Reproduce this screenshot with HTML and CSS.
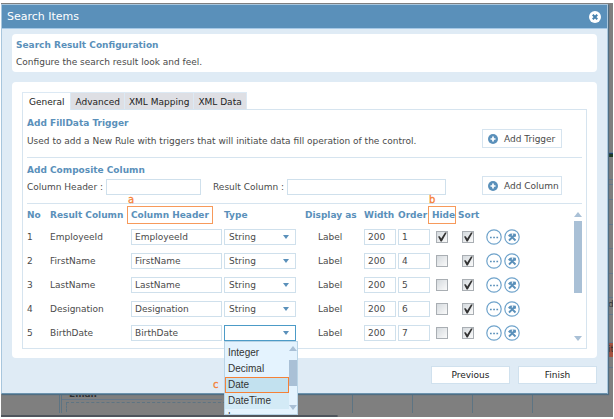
FILE: index.html
```html
<!DOCTYPE html>
<html lang="en">
<head>
  <meta charset="utf-8">
  <title>Search Items</title>
  <meta name="viewport" content="width=device-width, initial-scale=1.0">
  <link rel="stylesheet" href="styles.css">
</head>
<body>
  <svg class="sprite" aria-hidden="true">
    <symbol id="plus" viewBox="0 0 20 20">
      <circle cx="10" cy="10" r="10" fill="#5a90ba"/>
      <path d="M10 5v10M5 10h10" stroke="#fff" stroke-width="3.4"/>
    </symbol>
    <symbol id="dots" viewBox="0 0 16 16">
      <circle cx="8" cy="8" r="7.2" fill="#fff" stroke="#6fa3cb" stroke-width="1.2"/>
      <path d="M4 8.5h1.7M7.200 8.5h1.700M10.400 8.5h1.700" stroke="#5a90ba" stroke-width="1.5"/>
    </symbol>
    <symbol id="tools" viewBox="0 0 16 16">
      <circle cx="8" cy="8" r="7.200" fill="#fff" stroke="#6fa3cb" stroke-width="1.200"/>
      <path d="M5.500 5.500l6 6M10.500 6L5 11.500" stroke="#5a90ba" stroke-width="1.900"/>
      <path d="M4 6.600L6.800 4.400l2 .3-3.300 3.300zM9 4.600l2.800.2.300 2.600-2.400.6z" fill="#5a90ba"/>
    </symbol>
  </svg>

  <div class="screen">
    <div class="dialog" role="dialog" aria-labelledby="dialogTitle">
      <header class="dialog-header">
        <h1 id="dialogTitle">Search Items</h1>
        <button class="close" type="button" aria-label="Close">
          <svg viewBox="0 0 24 24"><circle cx="12" cy="12" r="12" fill="#fff"/><path d="M7.500 7.500l9 9M16.500 7.500l-9 9" stroke="#4681ae" stroke-width="4"/></svg>
        </button>
      </header>

      <div class="dialog-body">
        <section class="card intro">
          <h2>Search Result Configuration</h2>
          <p>Configure the search result look and feel.</p>
        </section>

        <section class="card config">
          <div class="tabs" role="tablist">
            <button class="tab active" type="button" role="tab" aria-selected="true">General</button>
            <button class="tab" type="button" role="tab">Advanced</button>
            <button class="tab" type="button" role="tab">XML Mapping</button>
            <button class="tab" type="button" role="tab">XML Data</button>
          </div>

          <div class="panel" role="tabpanel">
            <div class="block trigger">
              <div class="block-text">
                <h2>Add FillData Trigger</h2>
                <p>Used to add a New Rule with triggers that will initiate data fill operation of the control.</p>
              </div>
              <button class="add" type="button"><svg><use href="#plus"/></svg>Add Trigger</button>
            </div>

            <div class="block composite">
              <div class="block-text">
                <h2>Add Composite Column</h2>
                <div class="fields">
                  <label for="columnHeader">Column Header :</label>
                  <input class="short" type="text" id="columnHeader">
                  <label class="second" for="resultColumn">Result Column :</label>
                  <input class="long" type="text" id="resultColumn">
                </div>
              </div>
              <button class="add" type="button"><svg><use href="#plus"/></svg>Add Column</button>
            </div>

            <div class="list">
              <table>
                <colgroup>
                  <col class="c-no"><col class="c-result"><col class="c-header"><col class="c-type"><col class="c-display"><col class="c-width"><col class="c-order"><col class="c-hide"><col class="c-sort"><col class="c-actions">
                </colgroup>
                <thead>
                  <tr>
                    <th>No</th>
                    <th>Result Column</th>
                    <th><span class="mark">Column Header<i class="note">a</i></span></th>
                    <th>Type</th>
                    <th>Display as</th>
                    <th>Width</th>
                    <th>Order</th>
                    <th><span class="mark mark-tight">Hide<i class="note">b</i></span></th>
                    <th>Sort</th>
                    <th></th>
                  </tr>
                </thead>
                <tbody>
                  <tr>
                    <td>1</td>
                    <td>EmployeeId</td>
                    <td><input type="text" value="EmployeeId" aria-label="Column header 1"></td>
                    <td><div class="select"><select aria-label="Type 1"><option>String</option></select></div></td>
                    <td class="display">Label</td>
                    <td><input class="num" type="text" value="200" aria-label="Width 1"></td>
                    <td><input class="num" type="text" value="1" aria-label="Order 1"></td>
                    <td><input type="checkbox" aria-label="Hide 1" checked></td>
                    <td><input type="checkbox" aria-label="Sort 1" checked></td>
                    <td class="actions"><button type="button" aria-label="More"><svg><use href="#dots"/></svg></button><button type="button" aria-label="Settings"><svg><use href="#tools"/></svg></button></td>
                  </tr>
                  <tr>
                    <td>2</td>
                    <td>FirstName</td>
                    <td><input type="text" value="FirstName" aria-label="Column header 2"></td>
                    <td><div class="select"><select aria-label="Type 2"><option>String</option></select></div></td>
                    <td class="display">Label</td>
                    <td><input class="num" type="text" value="200" aria-label="Width 2"></td>
                    <td><input class="num" type="text" value="4" aria-label="Order 2"></td>
                    <td><input type="checkbox" aria-label="Hide 2"></td>
                    <td><input type="checkbox" aria-label="Sort 2" checked></td>
                    <td class="actions"><button type="button" aria-label="More"><svg><use href="#dots"/></svg></button><button type="button" aria-label="Settings"><svg><use href="#tools"/></svg></button></td>
                  </tr>
                  <tr>
                    <td>3</td>
                    <td>LastName</td>
                    <td><input type="text" value="LastName" aria-label="Column header 3"></td>
                    <td><div class="select"><select aria-label="Type 3"><option>String</option></select></div></td>
                    <td class="display">Label</td>
                    <td><input class="num" type="text" value="200" aria-label="Width 3"></td>
                    <td><input class="num" type="text" value="5" aria-label="Order 3"></td>
                    <td><input type="checkbox" aria-label="Hide 3"></td>
                    <td><input type="checkbox" aria-label="Sort 3" checked></td>
                    <td class="actions"><button type="button" aria-label="More"><svg><use href="#dots"/></svg></button><button type="button" aria-label="Settings"><svg><use href="#tools"/></svg></button></td>
                  </tr>
                  <tr>
                    <td>4</td>
                    <td>Designation</td>
                    <td><input type="text" value="Designation" aria-label="Column header 4"></td>
                    <td><div class="select"><select aria-label="Type 4"><option>String</option></select></div></td>
                    <td class="display">Label</td>
                    <td><input class="num" type="text" value="200" aria-label="Width 4"></td>
                    <td><input class="num" type="text" value="6" aria-label="Order 4"></td>
                    <td><input type="checkbox" aria-label="Hide 4"></td>
                    <td><input type="checkbox" aria-label="Sort 4" checked></td>
                    <td class="actions"><button type="button" aria-label="More"><svg><use href="#dots"/></svg></button><button type="button" aria-label="Settings"><svg><use href="#tools"/></svg></button></td>
                  </tr>
                  <tr>
                    <td>5</td>
                    <td>BirthDate</td>
                    <td><input type="text" value="BirthDate" aria-label="Column header 5"></td>
                    <td>
                      <div class="select open">
                        <select aria-label="Type 5"><option></option></select>
                        <div class="menu">
                          <ul role="listbox">
                            <li role="option">Integer</li>
                            <li role="option">Decimal</li>
                            <li role="option" class="selected">Date<i class="note">c</i></li>
                            <li role="option" class="hover">DateTime</li>
                            <li role="option">Long</li>
                          </ul>
                          <div class="scrollbar"><span class="up"></span><span class="thumb"></span><span class="down"></span></div>
                        </div>
                      </div>
                    </td>
                    <td class="display">Label</td>
                    <td><input class="num" type="text" value="200" aria-label="Width 5"></td>
                    <td><input class="num" type="text" value="7" aria-label="Order 5"></td>
                    <td><input type="checkbox" aria-label="Hide 5"></td>
                    <td><input type="checkbox" aria-label="Sort 5" checked></td>
                    <td class="actions"><button type="button" aria-label="More"><svg><use href="#dots"/></svg></button><button type="button" aria-label="Settings"><svg><use href="#tools"/></svg></button></td>
                  </tr>
                </tbody>
              </table>
              <div class="scrollbar"><span class="up"></span><span class="thumb"></span><span class="down"></span></div>
            </div>
          </div>
        </section>

        <footer class="dialog-footer">
          <button type="button">Previous</button>
          <button type="button">Finish</button>
        </footer>
      </div>
    </div>

    <!-- dimmed form behind the dialog -->
    <div class="behind-right">
      <span></span>
      <span class="green"></span>
      <span></span>
      <span></span>
      <span></span>
      <span></span>
      <span></span>
      <span></span>
      <span></span>
      <span>d</span>
      <span></span>
      <span class="red">it</span>
      <span></span>
    </div>
    <div class="behind-bottom">
      <div class="form-part">
        <div class="email"><b>Email</b></div>
        <div class="drop"></div>
      </div>
      <div class="cell"></div>
      <div class="cell"></div>
      <div class="cell"></div>
      <div class="cell"></div>
    </div>
  </div>
</body>
</html>
```
FILE: styles.css
```css
* {
  box-sizing: border-box;
}
body {
  margin: 0;
  background: #fff;
  color: #4a4a4a;
  font-family: "DejaVu Sans", Verdana, sans-serif;
  font-size: 9px;
  line-height: 12px;
}
h1, h2, p, ul {
  margin: 0;
  padding: 0;
}
button, input, select {
  margin: 0;
  padding: 0;
  color: inherit;
  font: inherit;
}
.sprite {
  position: absolute;
  width: 0;
  height: 0;
}
.screen {
  display: grid;
  grid-template-columns: 1fr 5px;
  grid-template-rows: auto 23px;
  margin: 3px 1px 0;
  padding-top: 1px;
  background: #7f7f7f;
}

/* dialog */
.dialog {
  z-index: 1;
  border: 1px solid #a8c6dd;
  border-bottom-color: #6c93ae;
  background: #dfebf5;
  box-shadow: 1px 1px 1px #4f6d82;
}
.dialog-header {
  display: flex;
  align-items: center;
  justify-content: space-between;
  height: 24px;
  padding: 0 6px 0 5px;
  border-bottom: 1px solid #a5c8e6;
  background: #5a90ba;
  color: #fff;
}
.dialog-header h1 {
  font-size: 11px;
  font-weight: normal;
}
.close {
  width: 12px;
  height: 12px;
  border: 0;
  background: none;
}
.close svg {
  display: block;
}
.dialog-body {
  padding: 5px 10px 9px;
}
.card {
  border-radius: 4px;
  background: #fff;
}
h2 {
  color: #5a90ba;
  font-size: 9px;
  font-weight: bold;
}
.intro {
  display: grid;
  gap: 5px;
  padding: 5px 4px 4px;
}
.config {
  margin-top: 10px;
  padding: 10px 10px 9px;
}

/* tabs */
.tabs {
  display: flex;
}
.tab {
  height: 17px;
  padding: 1px 4px 0;
  border: 1px solid #dce9f4;
  border-left-width: 0;
  border-bottom: 0;
  background: #dedfe4;
  color: #222;
}
.tab.active {
  height: 18px;
  margin-bottom: -1px;
  padding: 0 6px;
  border-left-width: 1px;
  background: #fff;
}
.panel {
  padding: 0 4px;
  border: 1px solid #d6e4ef;
}
.block {
  display: flex;
  align-items: flex-start;
  padding-right: 20px;
  border-bottom: 1px solid #d6e4ef;
}
.block-text {
  flex: 1;
}
.trigger {
  height: 48px;
  padding-top: 7px;
}
.trigger .block-text {
  display: grid;
  gap: 6px;
}
.composite {
  height: 46px;
  padding-top: 6px;
}
.add {
  display: flex;
  align-items: center;
  gap: 6px;
  width: 80px;
  height: 19px;
  margin-top: 12px;
  padding-left: 5px;
  border: 1px solid #d6e4ef;
  background: #fff;
  white-space: nowrap;
}
.add svg {
  width: 10px;
  height: 10px;
}
.fields {
  display: flex;
  align-items: center;
  margin-top: 3px;
}
.fields label {
  width: 79px;
}
.fields .second {
  width: 74px;
  margin-left: 12px;
}
input[type="text"] {
  height: 16px;
  padding: 0 3px;
  border: 1px solid #cfe0ec;
  background: #fff;
}
.fields .short {
  width: 95px;
}
.fields .long {
  width: 159px;
}

/* column list */
.list {
  display: flex;
  align-items: flex-start;
  justify-content: space-between;
  height: 144px;
}
table {
  width: 520px;
  border-collapse: collapse;
  table-layout: fixed;
}
.c-no { width: 23px; }
.c-result { width: 81px; }
.c-header { width: 93px; }
.c-type { width: 81px; }
.c-display { width: 59px; }
.c-width { width: 34px; }
.c-order { width: 34px; }
.c-hide { width: 26px; }
.c-sort { width: 28px; }
th, td {
  padding: 0;
  text-align: left;
  white-space: nowrap;
}
th {
  height: 21px;
  color: #5a90ba;
}
td {
  height: 24px;
}
td input[type="text"] {
  display: block;
  width: 91px;
}
td input.num[type="text"] {
  width: 32px;
}
td.display {
  padding-left: 13px;
}
.select {
  position: relative;
  width: 72px;
}
.select select {
  display: block;
  width: 100%;
  height: 16px;
  padding: 0 4px;
  border: 1px solid #cfe0ec;
  border-radius: 0;
  background: #fff;
  appearance: none;
}
.select::after {
  position: absolute;
  top: 6px;
  right: 7px;
  border: 3px solid transparent;
  border-top: 4px solid #5a90ba;
  border-bottom: 0;
  content: "";
}
.select.open select {
  border-color: #4c9bc7;
}
input[type="checkbox"] {
  display: block;
  width: 12px;
  height: 12px;
  margin-left: 4px;
  border: 1px solid #a9aeb3;
  background: linear-gradient(135deg, #d5dade, #fafafa);
  appearance: none;
}
input[type="checkbox"]:checked::before {
  display: block;
  height: 10px;
  background: #333;
  clip-path: polygon(10% 45%, 28% 42%, 42% 66%, 80% 4%, 98% 4%, 48% 96%, 36% 96%);
  content: "";
}
.actions button {
  width: 16px;
  height: 16px;
  margin-right: 2px;
  border: 0;
  background: none;
  vertical-align: middle;
}
.actions svg {
  display: block;
  width: 16px;
  height: 16px;
}

/* callouts */
.mark {
  position: relative;
  display: inline-block;
  margin-left: -4px;
  padding: 2px 3px;
  border: 1px solid #f79a5b;
}
.mark-tight {
  padding-right: 0;
}
.note {
  position: absolute;
  top: -13px;
  left: 0;
  color: #f58137;
  font-size: 10px;
  font-style: normal;
  font-weight: normal;
  -webkit-text-stroke: 0.3px #f58137;
}

/* scrollbars */
.scrollbar {
  display: flex;
  flex-direction: column;
  align-items: center;
  width: 8px;
}
.up, .down {
  border: 4px solid transparent;
}
.up {
  border-top: 0;
  border-bottom: 5px solid #a9c0d6;
}
.down {
  margin-top: auto;
  border-top: 5px solid #a9c0d6;
  border-bottom: 0;
}
.thumb {
  width: 8px;
  background: #a9c0d6;
}
.list > .scrollbar {
  height: 144px;
  padding: 8px 0 7px;
}
.list > .scrollbar .thumb {
  height: 72px;
  margin-top: 4px;
}

/* open type list */
.menu {
  position: absolute;
  z-index: 2;
  top: 16px;
  left: 0;
  display: flex;
  width: 74px;
  height: 74px;
  border: 1px solid #b9d4e6;
  background: #e4f3fe;
  color: #333;
  font-family: "Liberation Sans", Arial, sans-serif;
  font-size: 10px;
}
.menu ul {
  flex: 1;
  height: 72px;
  padding-top: 3px;
  list-style: none;
  clip-path: inset(0 0 0 -20px);
}
.menu li {
  position: relative;
  height: 16px;
  padding-left: 3px;
  line-height: 16px;
}
.menu .selected {
  padding-left: 2px;
  border: 1px solid #f58137;
  background: #c2e1ef;
  line-height: 14px;
}
.menu .hover {
  background: #d3eaf6;
}
.menu .note {
  top: 0;
  left: -13px;
  font-family: "DejaVu Sans", Verdana, sans-serif;
}
.menu .scrollbar {
  padding: 4px 0;
}
.menu .thumb {
  height: 26px;
  margin-top: 9px;
}

.dialog-footer {
  display: flex;
  justify-content: flex-end;
  gap: 8px;
  margin-top: 8px;
}
.dialog-footer button {
  width: 79px;
  height: 18px;
  border: 1px solid #d0e1ee;
  background: #fff;
  color: #222;
}

/* form behind the dialog */
.behind-right {
  display: grid;
  grid-template-rows: 149px 4px 23px 5px 15px 25px 24px 25px 24px 17px 28px 14px 11px;
  overflow: hidden;
  color: #333;
}
.behind-right span {
  border-bottom: 1px solid #66788a;
}
.behind-right .green {
  border-top: 1px solid #1f3f6a;
  border-bottom: 0;
  background: #1d3a24;
}
.behind-right .red {
  border: 0;
  background: #a3513f;
}
.behind-bottom {
  grid-column: 1 / 3;
  display: flex;
  padding-left: 58px;
  background: linear-gradient(#4f555c, #4f555c) left bottom / 55% 2px no-repeat;
}
.form-part {
  width: 293px;
  height: 19px;
  border-left: 3px double #5d7483;
}
.email {
  display: flex;
  align-items: flex-end;
  width: 160px;
  height: 6px;
  padding-left: 7px;
  border-bottom: 1px solid #66788a;
  color: #2f2f2f;
  line-height: 10px;
}
.drop {
  width: 160px;
  height: 10px;
  margin: 2px 0 0 4px;
  border-top: 1px dashed #5d7483;
  border-left: 1px dashed #5d7483;
}
.cell {
  width: 60px;
  height: 19px;
  border-left: 1px solid #5d7483;
}
```
